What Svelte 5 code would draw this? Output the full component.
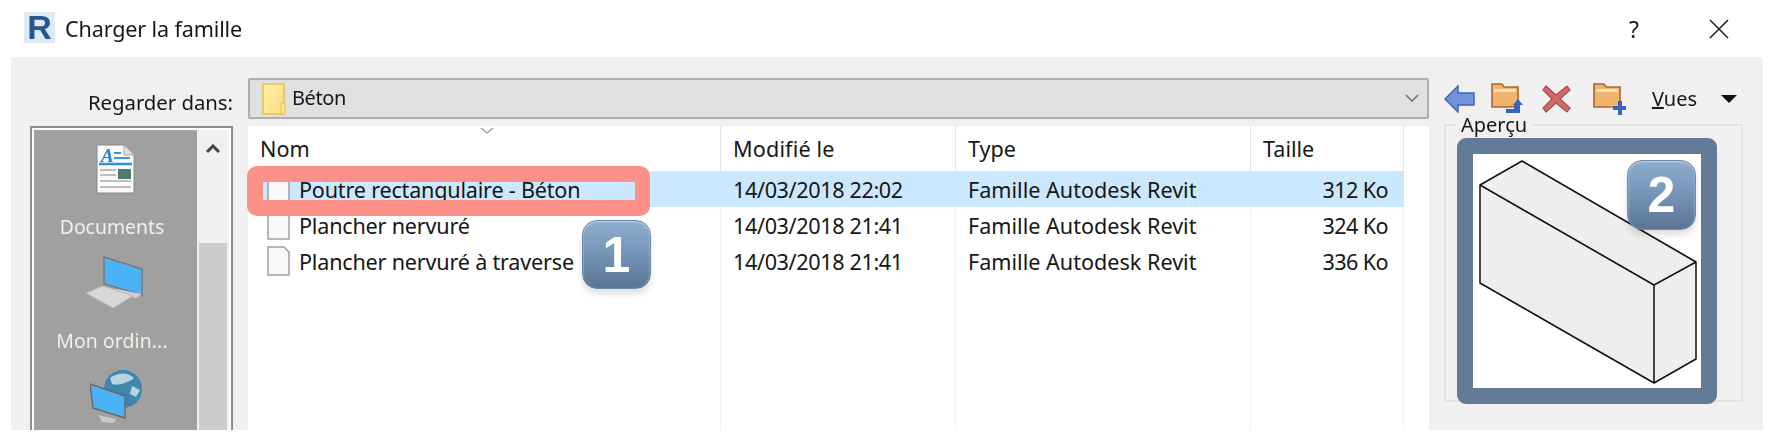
<script lang="ts">
	const files = [
		{ name: 'Poutre rectangulaire - Béton', date: '14/03/2018 22:02', size: '312 Ko', selected: true },
		{ name: 'Plancher nervuré', date: '14/03/2018 21:41', size: '324 Ko', selected: false },
		{ name: 'Plancher nervuré à traverse', date: '14/03/2018 21:41', size: '336 Ko', selected: false }
	];
</script>

<div class="dialog">
	<div class="shot">
		<header class="titlebar">
			<div class="app-icon">R</div>
			<span class="title">Charger la famille</span>
			<span class="help">?</span>
			<svg class="close" width="20" height="20" viewBox="0 0 20 20">
				<path d="M1 1 19 19M19 1 1 19" stroke="#222" stroke-width="1.6" fill="none" />
			</svg>
		</header>

		<div class="panel">
			<div class="look-label">Regarder dans:</div>
			<div class="combo">
				<svg width="24" height="32" viewBox="0 0 24 32">
					<defs>
						<linearGradient id="fold" x1="0" y1="0" x2="1" y2="1">
							<stop offset="0" stop-color="#fff0a8" />
							<stop offset="1" stop-color="#fbdf7f" />
						</linearGradient>
					</defs>
					<rect x="1" y="1" width="21" height="30" fill="url(#fold)" stroke="#e8c14d" stroke-width="1.5" />
					<path d="M19 31V20H23V31Z" fill="#fce28a" stroke="#e8c14d" />
				</svg>
				<span class="combo-text">Béton</span>
				<svg class="combo-caret" width="14" height="9" viewBox="0 0 14 9">
					<path d="M1 1 7 7 13 1" stroke="#777" stroke-width="1.6" fill="none" />
				</svg>
			</div>
			<div class="toolbar">
				<svg class="tool" width="31" height="28" viewBox="0 0 31 28">
					<path d="M14 1 1 14 14 27V20H30V8H14Z" fill="#6f93dc" stroke="#4462b0" stroke-width="1.5" />
				</svg>
				<svg class="tool" width="32" height="31" viewBox="0 0 32 31">
					<path d="M1 1H11L13 4H27V24H1Z" fill="#eeb36e" stroke="#a9682d" stroke-width="1.6" />
					<rect x="3" y="6" width="22" height="3" fill="#fde1b4" />
					<path d="M22 22 27 16 32 22H29V30H15V26H23V22Z" fill="#3a62c0" />
				</svg>
				<svg class="tool" width="29" height="28" viewBox="0 0 29 28">
					<path d="M4 1 14 10 25 1 28 5 18 14 28 23 25 27 14 18 4 27 1 23 10 14 1 5Z" fill="#cf6a6a" stroke="#a94848" stroke-width="1.2" />
				</svg>
				<svg class="tool" width="33" height="32" viewBox="0 0 33 32">
					<path d="M1 1H11L13 4H27V24H1Z" fill="#eeb36e" stroke="#a9682d" stroke-width="1.6" />
					<rect x="3" y="6" width="22" height="3" fill="#fde1b4" />
					<path d="M20 23H25V18H29V23H33V27H29V32H25V27H20Z" fill="#3a62c0" />
				</svg>
				<span class="views"><u>V</u>ues</span>
				<span class="views-caret"></span>
			</div>

			<aside class="places">
				<div class="places-list">
					<svg width="39" height="50" viewBox="0 0 39 50">
						<path d="M1 1H28L38 11V49H1Z" fill="#fbfbfb" stroke="#888" />
						<path d="M28 1V11H38" fill="#ddd" stroke="#aaa" />
						<text x="5" y="18" class="doc-a">A</text>
						<path d="M18 9H25M18 14H34" stroke="#3a9ad9" stroke-width="2" />
						<path d="M3 20H36" stroke="#2a8fd8" stroke-width="2.4" />
						<path d="M4 26H20M4 31H20M4 37H35M4 43H35" stroke="#aaa" stroke-width="1.5" />
						<rect x="22" y="25" width="13" height="10" fill="#4c7a70" />
					</svg>
					<span class="place-label">Documents</span>
					<svg class="place-pc" width="57" height="52" viewBox="0 0 57 52">
						<path d="M18 1 56 13V39L18 28Z" fill="#4bb3f5" stroke="#777" stroke-width="1.4" />
						<path d="M30 33 56 38 50 42 28 38Z" fill="#d0d0d0" />
						<path d="M0 37 17 30 47 40 27 52Z" fill="#d8d8d8" stroke="#bbb" />
					</svg>
					<span class="place-label second">Mon ordin...</span>
					<svg class="place-net" width="52" height="54" viewBox="0 0 52 54">
						<circle cx="33" cy="20" r="19" fill="#3f86ab" />
						<path d="M20 9C28 3 38 3 44 9 38 14 28 17 22 15ZM42 17 50 21 46 28 40 25Z" fill="#b6d4e2" />
						<path d="M0 15 35 27V49L3 39Z" fill="#4bb3f5" stroke="#666" stroke-width="1.4" />
						<path d="M8 46 26 50 24 54 12 53Z" fill="#c8c8c8" />
					</svg>
				</div>
				<div class="scrollbar">
					<svg width="14" height="10" viewBox="0 0 14 10">
						<path d="M1 8 7 2 13 8" stroke="#444" stroke-width="3" fill="none" />
					</svg>
					<div class="thumb"></div>
				</div>
			</aside>

			<section class="list">
				<div class="list-row head">
					<div class="cell">Nom</div>
					<div class="cell wide">Modifié le</div>
					<div class="cell">Type</div>
					<div class="cell">Taille</div>
				</div>
				<svg class="sort-caret" width="14" height="8" viewBox="0 0 14 8">
					<path d="M1 1 7 6 13 1" stroke="#999" stroke-width="1.2" fill="none" />
				</svg>
				{#each files as file}
					<div class="list-row" class:selected={file.selected}>
						<div class="cell name">
							<svg class="file-icon" width="23" height="30" viewBox="0 0 23 30">
								<path d="M1 1H17L22 6V29H1Z" fill="#f9f9f9" stroke="#a0a0a0" stroke-width="1.5" />
							</svg>
							{file.name}
						</div>
						<div class="cell date">{file.date}</div>
						<div class="cell">Famille Autodesk Revit</div>
						<div class="cell size">{file.size}</div>
					</div>
				{/each}
			</section>

			<fieldset class="preview">
				<legend>Aperçu</legend>
			</fieldset>
		</div>
	</div>

	<!-- annotations laid over the screenshot -->
	<div class="ring"></div>
	<div class="badge one">1</div>
	<div class="frame">
		<svg width="228" height="234" viewBox="1473 154 228 234">
			<path d="M1480 185 1522 161 1696 262 1654 285ZM1480 185V283L1654 383V285ZM1654 285 1696 262V359L1654 383Z" fill="#eee" stroke="#111" stroke-width="1.5" stroke-linejoin="round" />
		</svg>
	</div>
	<div class="badge two">2</div>
</div>

<style>
	:global(body) {
		margin: 0;
		background: #fff;
	}

	.dialog {
		position: relative;
		width: 1776px;
		height: 440px;
		overflow: hidden;
		font-family: 'Noto Sans', sans-serif;
		font-size: 21.6px;
		color: #161616;
	}

	/* the reference is an upscaled capture, so everything under the notes is soft */
	.shot {
		filter: blur(0.5px);
	}

	.titlebar {
		display: flex;
		align-items: center;
		height: 57px;
		padding-left: 24px;
		box-sizing: border-box;
	}

	.app-icon {
		width: 31px;
		height: 31px;
		margin-top: -2px;
		display: flex;
		align-items: center;
		justify-content: center;
		background: #dfeaf5;
		color: #24598f;
		font: bold 34px/31px 'Liberation Sans', sans-serif;
	}

	.title {
		margin-left: 10px;
		letter-spacing: -0.15px;
	}

	.help {
		margin-left: auto;
		font-size: 23px;
	}

	.close {
		margin: 0 47px 0 70px;
	}

	.panel {
		display: grid;
		grid-template-columns: 203px 1181px 1fr;
		grid-template-rows: 41px 304px;
		column-gap: 15px;
		row-gap: 7px;
		margin: 0 13px 0 11px;
		padding: 21px 0 0 19px;
		height: 373px;
		box-sizing: border-box;
		background: #f0f0f0;
	}

	.look-label {
		align-self: end;
		text-align: right;
		padding-bottom: 3px;
		white-space: nowrap;
		font-size: 20.4px;
		letter-spacing: -0.05px;
	}

	.combo {
		display: flex;
		align-items: center;
		padding-left: 12px;
		box-sizing: border-box;
		background: #e0e0e0;
		border: 2px solid #aeaeae;
		border-radius: 2px;
		font-size: 20px;
	}

	.combo-text {
		margin-left: 6px;
		margin-top: -3px;
		letter-spacing: -0.4px;
	}

	.combo-caret {
		margin-left: auto;
		margin-right: 8px;
	}

	.toolbar {
		display: flex;
		align-items: center;
		height: 41px;
		font-size: 20px;
	}

	.tool {
		flex: none;
	}

	.toolbar .tool:nth-child(2) {
		margin-left: 16px;
	}

	.toolbar .tool:nth-child(3) {
		margin-left: 19px;
	}

	.toolbar .tool:nth-child(4) {
		margin-left: 22px;
	}

	.views {
		margin-left: 26px;
	}

	.views-caret {
		margin-left: 24px;
		border: 8px solid transparent;
		border-top-color: #111;
		border-bottom: 0;
	}

	.places {
		display: flex;
		border: 2px solid #888d96;
		border-bottom: 0;
		padding: 2px 0 0 2px;
		box-sizing: border-box;
		background: #fff;
		overflow: hidden;
	}

	.places-list {
		display: flex;
		flex-direction: column;
		align-items: center;
		width: 163px;
		flex: none;
		padding-top: 14px;
		box-sizing: border-box;
		background: #a0a0a0;
		color: #f4f0e8;
		font-size: 19.4px;
	}

	.place-label {
		margin-top: 17px;
		margin-right: 7px;
		line-height: 32px;
	}

	.place-pc {
		margin-top: 13px;
		margin-left: -2px;
	}

	.place-label.second {
		margin-top: 17px;
		letter-spacing: 0.1px;
	}

	.place-net {
		margin-top: 12px;
	}

	.doc-a {
		font: italic bold 19px 'Liberation Serif', serif;
		fill: #1e88d8;
	}

	.scrollbar {
		display: flex;
		flex-direction: column;
		align-items: center;
		flex: 1;
		margin-right: 2px;
		padding-top: 14px;
		background: #f0f0f0;
	}

	.thumb {
		width: 28px;
		flex: 1;
		margin-top: 89px;
		background: #cdcdcd;
	}

	.list {
		position: relative;
		padding-right: 25px;
		display: flex;
		flex-direction: column;
		background-color: #fff;
		background-image: linear-gradient(#eaf2fb, #eaf2fb), linear-gradient(#eaf2fb, #eaf2fb), linear-gradient(#eaf2fb, #eaf2fb), linear-gradient(#eaf2fb, #eaf2fb);
		background-size: 1px 100%;
		background-repeat: no-repeat;
		background-position: 472px 0, 707px 0, 1002px 0, 1155px 0;
	}

	.list-row {
		display: grid;
		grid-template-columns: 473px 235px 295px 153px;
		height: 36px;
		align-items: center;
		flex: none;
	}

	.list-row.head {
		height: 45px;
	}

	.list-row.selected {
		background: #cce8ff;
	}

	.cell {
		padding-left: 12px;
		white-space: nowrap;
		box-sizing: border-box;
		height: 100%;
		display: flex;
		align-items: center;
		border-right: 1px solid transparent;
	}

	.head .cell {
		border-right-color: #e5e5e5;
	}

	.head .wide {
		letter-spacing: 0.15px;
	}

	.name {
		padding-left: 19px;
		letter-spacing: -0.2px;
	}

	.date {
		letter-spacing: -0.37px;
	}

	.file-icon {
		flex: none;
		margin-right: 9px;
	}

	.size {
		justify-content: flex-end;
		padding-right: 15px;
		letter-spacing: -0.6px;
	}

	.sort-caret {
		position: absolute;
		left: 232px;
		top: 1px;
	}

	.preview {
		margin: -11px 20px 0 0;
		padding: 0;
		height: 287px;
		box-sizing: border-box;
		border: 2px solid #e2e2e2;
		min-width: 0;
		font-size: 20px;
	}

	legend {
		margin-left: 10px;
		padding: 0 5px;
		line-height: 20px;
	}

	.ring {
		position: absolute;
		left: 247px;
		top: 166px;
		width: 403px;
		height: 50px;
		box-sizing: border-box;
		border: solid #fd918a;
		border-width: 16px 15px 16px 16px;
		border-radius: 10px;
	}

	.badge {
		position: absolute;
		display: flex;
		align-items: center;
		justify-content: center;
		box-sizing: border-box;
		border-radius: 15px;
		background: linear-gradient(#8fadcc 0%, #7c9cc0 35%, #5a7593 100%);
		box-shadow: inset 0 1px 2px #c8d8e8, 0 5px 6px rgba(0, 0, 0, 0.12);
		border: 1px solid #6d88a6;
		color: #fff;
		font: bold 50px 'Liberation Sans', sans-serif;
	}

	.badge.one {
		left: 582px;
		top: 220px;
		width: 69px;
		height: 69px;
	}

	.badge.two {
		left: 1627px;
		top: 160px;
		width: 69px;
		height: 70px;
	}

	.frame {
		position: absolute;
		left: 1457px;
		top: 138px;
		width: 260px;
		height: 266px;
		box-sizing: border-box;
		border: 16px solid #627a96;
		border-radius: 9px;
		background: #fff;
	}

	.frame svg {
		display: block;
	}
</style>
